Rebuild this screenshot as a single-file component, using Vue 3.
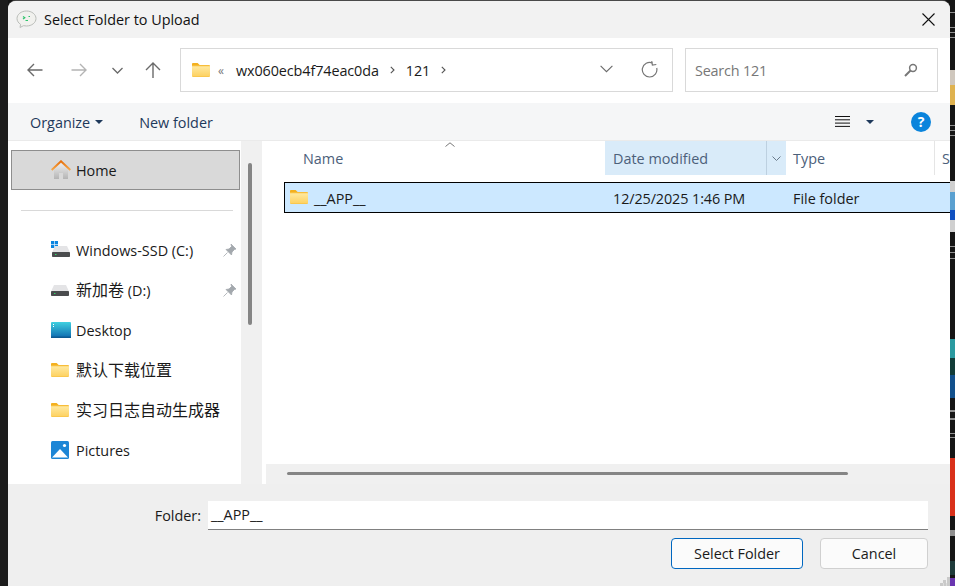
<template>
  <div class="desktop">
    <!-- shared icon shapes -->
    <svg class="icon-defs" width="0" height="0" aria-hidden="true">
      <defs>
        <linearGradient id="folderBody" x1="0" y1="0" x2="0" y2="1">
          <stop offset="0" stop-color="#ffe9a0" />
          <stop offset="1" stop-color="#fdd160" />
        </linearGradient>
        <linearGradient id="desktopBody" x1="0" y1="0" x2="0" y2="1">
          <stop offset="0" stop-color="#3fd0e0" />
          <stop offset="1" stop-color="#0f6cb0" />
        </linearGradient>
        <linearGradient id="homeBody" x1="0" y1="0" x2="0" y2="1">
          <stop offset="0" stop-color="#efefef" />
          <stop offset="1" stop-color="#b4b4b4" />
        </linearGradient>
        <linearGradient id="roof" x1="0" y1="0" x2="0" y2="1">
          <stop offset="0" stop-color="#e8700a" />
          <stop offset="1" stop-color="#f6a84a" />
        </linearGradient>
      </defs>
      <symbol id="i-folder" viewBox="0 0 18 14">
        <path d="M0 1.2C0 .5.5 0 1.2 0h4.4l2 2H0z" fill="#f4b01e" />
        <path d="M0 2h16.8c.7 0 1.2.5 1.2 1.2v9.6c0 .7-.5 1.2-1.2 1.2H1.2C.5 14 0 13.500 0 12.800z" fill="#f7bd3a" />
        <path d="M0 3.200h18v9.400c0 .6-.5 1-1.100 1H1.100c-.6 0-1.100-.4-1.100-1z" fill="url(#folderBody)" />
      </symbol>
      <symbol id="i-drive" viewBox="0 0 18 11">
        <path d="M3 0h12l3 6.500H0z" fill="#e4e4e6" />
        <rect x="0" y="6" width="18" height="5" rx=".8" fill="#4a4c4e" />
        <rect x="3" y="8" width="1.500" height="1" fill="#35d46a" />
      </symbol>
    </svg>

    <div class="backdrop-left"></div>

    <div class="window">
      <header class="titlebar">
        <svg class="app-icon" width="21" height="19" viewBox="0 0 21 19">
          <path d="M10.500 1C5.300 1 1 4.300 1 8.500c0 2.400 1.400 4.500 3.600 5.900L4 17.500l3.500-1.800c1 .2 2 .3 3 .3 5.200 0 9.500-3.300 9.500-7.500S15.700 1 10.500 1z" fill="#f1f1ee" stroke="#b9bcb8" />
          <path d="M7 6.500l1.800 1.300L7 9M12.500 6.500h1.500M9.500 10.500h2.500" fill="none" stroke="#2fc46c" stroke-width="1.200" />
        </svg>
        <span class="title-text">Select Folder to Upload</span>
        <svg class="close-icon" width="13" height="13" viewBox="0 0 13 13">
          <path d="M.5.500l12 12M12.500.500l-12 12" stroke="#111" stroke-width="1.100" fill="none" />
        </svg>
      </header>

      <div class="navbar">
        <div class="nav-buttons">
          <button class="nav-btn wide">
            <svg width="16" height="14" viewBox="0 0 16 14"><path d="M15.500 7H1M7 1L1 7l6 6" fill="none" stroke="#6a6a6a" stroke-width="1.400" /></svg>
          </button>
          <button class="nav-btn wide">
            <svg width="16" height="14" viewBox="0 0 16 14"><path d="M.5 7H15M9 1l6 6-6 6" fill="none" stroke="#b4b4b4" stroke-width="1.400" /></svg>
          </button>
          <button class="nav-btn mid">
            <svg width="11" height="7" viewBox="0 0 11 7"><path d="M.5 1l5 5 5-5" fill="none" stroke="#6a6a6a" stroke-width="1.300" /></svg>
          </button>
          <button class="nav-btn up">
            <svg width="16" height="16" viewBox="0 0 16 16"><path d="M8 16V1.500M1 8l7-7 7 7" fill="none" stroke="#6a6a6a" stroke-width="1.400" /></svg>
          </button>
        </div>

        <div class="address">
          <svg class="addr-folder" width="18" height="14"><use href="#i-folder" /></svg>
          <span class="addr-more">«</span>
          <span class="crumb">wx060ecb4f74eac0da</span>
          <svg class="crumb-sep" width="5" height="8" viewBox="0 0 5 8"><path d="M.8.800L4 4 .8 7.200" fill="none" stroke="#555" stroke-width="1.100" /></svg>
          <span class="crumb">121</span>
          <svg class="crumb-sep" width="5" height="8" viewBox="0 0 5 8"><path d="M.8.800L4 4 .8 7.200" fill="none" stroke="#555" stroke-width="1.100" /></svg>
          <span class="addr-spacer"></span>
          <svg class="addr-drop" width="13" height="8" viewBox="0 0 13 8"><path d="M.6.800L6.500 6.700 12.400.800" fill="none" stroke="#6a6a6a" stroke-width="1.100" /></svg>
          <svg class="addr-refresh" width="17" height="17" viewBox="0 0 17 17">
            <path d="M11.500 2A7.300 7.300 0 1 0 15.700 7" fill="none" stroke="#777" stroke-width="1.200" />
            <path d="M11 .2v4h4" fill="none" stroke="#777" stroke-width="1.200" transform="rotate(-10 11 2)" />
          </svg>
        </div>

        <div class="search">
          <span class="search-text">Search 121</span>
          <svg width="14" height="14" viewBox="0 0 14 14">
            <circle cx="9" cy="5" r="3.400" fill="none" stroke="#777" stroke-width="1.500" />
            <path d="M6.500 7.500L1 13" stroke="#777" stroke-width="2" fill="none" />
          </svg>
        </div>
      </div>

      <div class="toolbar">
        <span class="tool-label">Organize</span>
        <span class="caret"></span>
        <span class="tool-label new-folder">New folder</span>
        <span class="tool-spacer"></span>
        <svg class="list-icon" width="15" height="13" viewBox="0 0 15 13">
          <path d="M0 1.500h15M0 4.800h15M0 8.100h15M0 11.400h15" stroke="#111" stroke-width="1" fill="none" />
        </svg>
        <span class="caret view-caret"></span>
        <span class="help">?</span>
      </div>

      <div class="main">
        <nav class="sidebar">
          <div class="side-item home">
            <svg class="side-icon" width="20" height="20" viewBox="0 0 20 20">
              <path d="M3 9.500L10 3l7 6.500V19H12v-6H8v6H3z" fill="url(#homeBody)" />
              <path d="M.7 10L10 1.300 19.300 10" fill="none" stroke="url(#roof)" stroke-width="2" />
            </svg>
            <span>Home</span>
          </div>
          <div class="side-divider"><span></span></div>

          <div v-for="item in places" :key="item.cjk + item.label" class="side-item">
            <span class="side-icon-box">
              <template v-if="item.icon === 'system'">
                <svg class="side-icon" width="20" height="18" viewBox="0 0 20 18">
                  <rect x="0" y="0" width="3.200" height="3.200" fill="#0a84e0" />
                  <rect x="3.800" y="0" width="3.200" height="3.200" fill="#0a84e0" />
                  <rect x="0" y="3.800" width="3.200" height="3.200" fill="#0a84e0" />
                  <rect x="3.800" y="3.800" width="3.200" height="3.200" fill="#0a84e0" />
                  <use href="#i-drive" x="1" y="5" width="18" height="11" />
                </svg>
              </template>
              <svg v-else-if="item.icon === 'drive'" class="side-icon" width="18" height="11"><use href="#i-drive" /></svg>
              <svg v-else-if="item.icon === 'folder'" class="side-icon" width="18" height="14"><use href="#i-folder" /></svg>
              <svg v-else-if="item.icon === 'desktop'" class="side-icon" width="20" height="16" viewBox="0 0 20 16">
                <rect width="20" height="15.500" rx="1" fill="url(#desktopBody)" />
                <path d="M2 2.500h1M2 4.500h1" stroke="#fff" stroke-width="1" />
                <rect y="14.500" width="20" height="1.500" fill="#0d5a92" />
              </svg>
              <svg v-else class="side-icon" width="18" height="18" viewBox="0 0 18 18">
                <rect width="18" height="18" rx="1.500" fill="#1d86d6" />
                <circle cx="13.500" cy="4.500" r="1.600" fill="#fff" />
                <path d="M1 16.500L9 8l8 8.500z" fill="#fff" />
              </svg>
            </span>
            <span class="side-label" :class="{ 'has-cjk': item.cjk }"><span v-if="item.cjk" class="cjk">{{ item.cjk }}</span>{{ item.label }}</span>
            <svg v-if="item.pinned" class="pin" width="13" height="13" viewBox="0 0 13 13">
              <path d="M8 0l5 5-1.500.5-2.500 2.500-.5 3L3 5.500l3-.5 2.500-2.500zM4.500 8.500L.5 12.500" fill="#a3a8ad" stroke="#a3a8ad" stroke-width=".8" />
            </svg>
          </div>
        </nav>

        <div class="side-scroll"><span class="side-thumb"></span></div>

        <section class="files">
          <div class="file-head">
            <div class="col col-name">
              <span>Name</span>
              <svg class="sort-mark" width="10" height="5" viewBox="0 0 10 5"><path d="M.5 4.500L5 .8l4.500 3.700" fill="none" stroke="#777" stroke-width="1" /></svg>
            </div>
            <div class="col col-date"><span>Date modified</span><span class="date-drop"><svg width="9" height="5" viewBox="0 0 9 5"><path d="M.5.500l4 4 4-4" fill="none" stroke="#6a7a8a" stroke-width="1" /></svg></span></div>
            <div class="col col-type">Type</div>
            <div class="col col-size">S</div>
          </div>

          <div class="file-list">
            <div v-for="file in files" :key="file.name" class="file-row">
              <div class="cell cell-name">
                <svg width="18" height="14"><use href="#i-folder" /></svg>
                <span>{{ file.name }}</span>
              </div>
              <div class="cell cell-date">{{ file.modified }}</div>
              <div class="cell cell-type">{{ file.type }}</div>
            </div>
          </div>

          <div class="h-scroll"><span class="h-thumb"></span></div>
        </section>
      </div>

      <footer class="footer">
        <div class="folder-row">
          <label class="folder-label">Folder:</label>
          <div class="folder-input">__APP__</div>
        </div>
        <div class="button-row">
          <button class="btn primary">Select Folder</button>
          <button class="btn">Cancel</button>
        </div>
        <svg class="grip" width="10" height="9" viewBox="0 0 10 9">
          <path d="M7 0h3v3H7zM3 3h3v3H3zM7 3h3v3H7zM0 6h3v3H0zM3.500 6h3v3h-3zM7 6h3v3H7z" fill="#c9c9c9" />
        </svg>
      </footer>
    </div>

    <!-- sliver of the apps behind the dialog -->
    <div class="backdrop-right">
      <span
        v-for="(band, i) in bands"
        :key="i"
        class="band"
        :style="{ height: band[0] + 'px', background: band[1] }"
      ></span>
    </div>
  </div>
</template>

<script setup>
const places = [
  { cjk: '', label: 'Windows-SSD (C:)', icon: 'system', pinned: true },
  { cjk: '新加卷', label: ' (D:)', icon: 'drive', pinned: true },
  { cjk: '', label: 'Desktop', icon: 'desktop' },
  { cjk: '默认下载位置', label: '', icon: 'folder' },
  { cjk: '实习日志自动生成器', label: '', icon: 'folder' },
  { cjk: '', label: 'Pictures', icon: 'pictures' }
]

const files = [
  { name: '__APP__', modified: '12/25/2025 1:46 PM', type: 'File folder' }
]

// colour blocks seen to the right of the dialog, top to bottom [height, colour]
const dark = '#151515'
const tick = '#8f8f8f'
const bands = [
  [12, dark], [1, tick], [14, dark], [1, tick], [4, dark], [1, tick], [4, dark], [1, tick], [32, dark],
  [15, '#cfc7bd'],
  [20, '#dfb24f'],
  [20, dark], [1, tick], [4, dark], [1, tick], [4, dark], [1, tick], [45, dark],
  [11, '#cfcfcf'],
  [18, '#5aa0d0'],
  [10, '#1050c0'],
  [12, '#cfcfcf'],
  [14, dark], [1, tick], [5, dark], [1, tick], [5, dark], [1, tick], [80, dark],
  [19, '#2a9aa0'],
  [17, '#123c38'],
  [23, '#12508c'],
  [12, dark], [2, tick], [6, dark], [2, tick], [13, dark], [1, tick], [3, dark], [1, tick], [20, dark],
  [58, '#d9301a'],
  [14, dark], [6, tick], [25, dark],
  [14, '#1e3a3a'],
  [3, dark],
  [8, '#6a35b0']
]
</script>

<style>
html,
body {
  margin: 0;
  background: #141414;
  overflow: hidden;
}
</style>

<style scoped>
.desktop {
  display: flex;
  width: 955px;
  height: 586px;
  background: #141414;
  font-family: "Open Sans", "Noto Sans CJK SC", sans-serif;
  font-size: 14.4px;
  color: #1a1a1a;
  overflow: hidden;
}

.icon-defs {
  position: absolute;
}

.cjk {
  font-size: 16px;
}

.backdrop-left {
  width: 8px;
  flex: none;
  background: #1c1c1c;
}

.backdrop-right {
  width: 5px;
  flex: none;
  display: flex;
  flex-direction: column;
  overflow: hidden;
}

.band {
  display: block;
  flex: none;
}

.window {
  width: 942px;
  flex: none;
  margin-top: 1px;
  display: flex;
  flex-direction: column;
  background: #efefef;
  border-radius: 8px 8px 0 0;
  box-shadow: 0 -1px 0 #4a4a4a;
  overflow: hidden;
}

.titlebar {
  height: 37px;
  flex: none;
  display: flex;
  align-items: center;
  padding-left: 8px;
  background: #f2f2f2;
}

.app-icon {
  margin-right: 7px;
  margin-bottom: 1px;
}

.title-text {
  color: #111;
}

.close-icon {
  margin-left: auto;
  margin-right: 15px;
}

.navbar {
  height: 65px;
  flex: none;
  display: flex;
  align-items: center;
  box-sizing: border-box;
  padding-bottom: 1px;
  background: #fff;
}

.nav-buttons {
  width: 172px;
  flex: none;
  display: flex;
  padding-left: 5px;
  box-sizing: border-box;
}

.nav-btn {
  display: flex;
  align-items: center;
  justify-content: center;
  height: 30px;
  padding: 0;
  border: 0;
  background: none;
}

.nav-btn.wide {
  width: 44px;
}

.nav-btn.mid {
  width: 32px;
}

.nav-btn.up {
  width: 40px;
}

.address,
.search {
  height: 44px;
  box-sizing: border-box;
  display: flex;
  align-items: center;
  border: 1px solid #d9d9d9;
}

.address {
  width: 493px;
  flex: none;
  padding-left: 11px;
}

.addr-more {
  margin: 0 12px 0 8px;
  color: #777;
  font-size: 12px;
}

.crumb {
  letter-spacing: -0.1px;
}

.crumb-sep {
  margin: 0 11px;
}

.addr-spacer {
  flex: 1;
}

.addr-drop {
  margin-right: 28px;
  margin-bottom: 2px;
}

.addr-refresh {
  margin-right: 14px;
  margin-bottom: 1px;
}

.search {
  width: 253px;
  flex: none;
  margin-left: 12px;
  padding: 0 19px 0 9px;
  justify-content: space-between;
}

.search-text {
  color: #777;
  letter-spacing: -0.2px;
}

.toolbar {
  height: 38px;
  flex: none;
  display: flex;
  align-items: center;
  padding-left: 22px;
  background: #f5f6f7;
  border-bottom: 1px solid #eaeaea;
  box-sizing: border-box;
}

.tool-label {
  padding-top: 2px;
  color: #1e395b;
}

.caret {
  width: 0;
  height: 0;
  margin-left: 5px;
  border-style: solid;
  border-width: 4px 4px 0;
  border-color: #1e395b transparent transparent;
}

.new-folder {
  margin-left: 36px;
}

.tool-spacer {
  flex: 1;
}

.view-caret {
  margin-left: 16px;
}

.help {
  width: 20px;
  height: 20px;
  margin: 0 19px 0 37px;
  border-radius: 50%;
  background: #0a84dc;
  color: #fff;
  font-size: 14px;
  font-weight: 700;
  line-height: 20px;
  text-align: center;
}

.main {
  flex: 1;
  min-height: 0;
  display: flex;
  background: #fff;
}

.sidebar {
  width: 233px;
  flex: none;
  box-sizing: border-box;
  padding: 9px 1px 0 3px;
  overflow: hidden;
}

.side-item {
  height: 40px;
  box-sizing: border-box;
  display: flex;
  align-items: center;
  padding-left: 40px;
  color: #1a1a1a;
}

.side-item.home {
  padding-left: 39px;
  background: #d9d9d9;
  border: 1px solid #8e8e8e;
}

.side-item.home .side-icon {
  margin-right: 5px;
}

.side-icon-box {
  width: 25px;
  flex: none;
  display: flex;
  align-items: center;
}

.side-divider {
  height: 40px;
  display: flex;
  align-items: center;
  padding: 0 7px 0 10px;
}

.side-divider span {
  flex: 1;
  height: 1px;
  background: #d9d9d9;
}

.side-label {
  flex: 1;
  white-space: pre;
}

.side-label.has-cjk {
  padding-bottom: 2px;
}

.pin {
  margin-right: 4px;
}

.side-scroll {
  width: 21px;
  flex: none;
  box-sizing: border-box;
  padding: 22px 0 0 7px;
  background: #f0f0f0;
}

.side-thumb {
  display: block;
  width: 4px;
  height: 162px;
  border-radius: 2px;
  background: #858585;
}

.files {
  flex: 1;
  min-width: 0;
  display: flex;
  flex-direction: column;
  overflow: hidden;
}

.file-head {
  height: 34px;
  flex: none;
  display: flex;
  color: #4c607a;
}

.col {
  box-sizing: border-box;
  display: flex;
  align-items: center;
  flex: none;
}

.col-name {
  position: relative;
  width: 343px;
  padding-left: 41px;
}

.sort-mark {
  position: absolute;
  left: 183px;
  top: 1px;
}

.col-date {
  width: 181px;
  padding-left: 8px;
  background: #d9ebf9;
}

.date-drop {
  display: flex;
  align-items: center;
  justify-content: center;
  align-self: stretch;
  width: 19px;
  margin-left: auto;
  border-left: 1px solid #bdd0e0;
}

.col-type {
  width: 149px;
  padding-left: 7px;
  border-right: 1px solid #e5e5e5;
}

.col-size {
  padding-left: 7px;
}

.file-list {
  flex: 1;
  padding: 7px 0 0 22px;
}

.file-row {
  height: 31px;
  box-sizing: border-box;
  display: flex;
  align-items: center;
  width: 700px;
  background: #cce8ff;
  border: 1px solid #000;
}

.cell {
  flex: none;
  display: flex;
  align-items: center;
  padding-top: 1px;
  white-space: nowrap;
}

.cell-name {
  width: 328px;
  padding-left: 5px;
  box-sizing: border-box;
  gap: 6px;
}

.cell-name svg {
  margin-bottom: 3px;
}

.cell-date {
  width: 180px;
  letter-spacing: -0.1px;
}

.h-scroll {
  height: 20px;
  flex: none;
  margin-left: 4px;
  padding: 8px 0 0 21px;
  box-sizing: border-box;
  background: #f0f0f0;
}

.h-thumb {
  display: block;
  width: 561px;
  height: 3px;
  border-radius: 2px;
  background: #858585;
}

.footer {
  position: relative;
  height: 102px;
  flex: none;
  box-sizing: border-box;
  padding: 17px 22px 0 0;
  display: flex;
  flex-direction: column;
  background: #efefef;
}

.folder-row {
  display: flex;
  align-items: center;
  justify-content: flex-end;
}

.folder-label {
  margin-right: 7px;
}

.folder-input {
  width: 720px;
  height: 29px;
  box-sizing: border-box;
  padding-left: 3px;
  line-height: 27px;
  background: #fff;
  border-bottom: 1px solid #808080;
}

.button-row {
  display: flex;
  justify-content: flex-end;
  gap: 17px;
  margin-top: 8px;
}

.btn {
  width: 108px;
  height: 31px;
  padding: 0;
  font: inherit;
  color: #1a1a1a;
  background: #fbfbfb;
  border: 1px solid #d0d0d0;
  border-radius: 4px;
}

.btn.primary {
  width: 132px;
  border-color: #0067c0;
}

.grip {
  position: absolute;
  right: 0;
  bottom: 0;
}
</style>
